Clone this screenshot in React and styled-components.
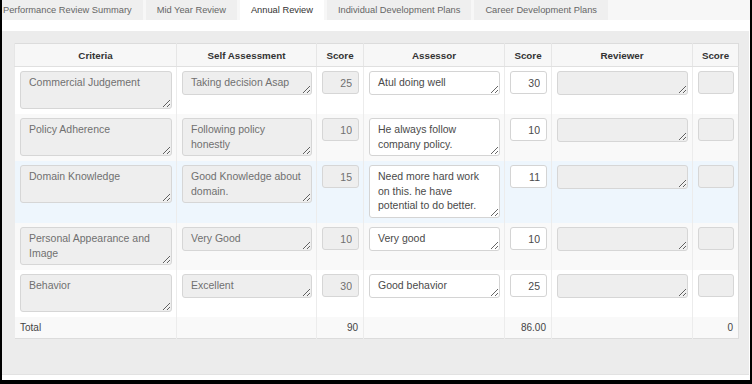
import React from 'react';
import styled, { createGlobalStyle } from 'styled-components';

const Global = createGlobalStyle`
  html, body { margin: 0; padding: 0; background: #fff; }
  body { font-family: "Liberation Sans", Arial, sans-serif; }
`;

const Frame = styled.div`
  width: 752px;
  height: 384px;
  box-sizing: border-box;
  border-left: 2px solid #000;
  border-right: 2px solid #000;
  border-bottom: 4px solid #000;
  background: #fff;
  display: flex;
  flex-direction: column;
  overflow: hidden;
`;

const TabBar = styled.div`
  display: flex;
  height: 20px;
  gap: 3px;
  background: #f7f7f7;
  margin-left: -10px;
`;

const Tab = styled.div`
  display: flex;
  align-items: center;
  padding: 0 11px;
  font-size: 9.3px;
  color: ${(p) => (p.$active ? '#333' : '#666')};
  background: ${(p) => (p.$active ? '#fff' : '#efefef')};
  white-space: nowrap;
`;

const Panel = styled.div`
  flex: 1;
  margin: 11px 1px 5px 0;
  padding: 12px 11px 12px 12px;
  background: #ececec;
  border-bottom: 1px solid #e2e2e2;
`;

const Table = styled.table`
  width: 724px;
  table-layout: fixed;
  border-collapse: collapse;
  background: #fff;
  border: 1px solid #dcdcdc;
  font-size: 10.5px;
`;

const Th = styled.th`
  height: 22px;
  padding: 0;
  background: #f7f7f7;
  border-bottom: 1px solid #e0e0e0;
  border-left: 1px solid #e6e6e6;
  font-weight: bold;
  font-size: 9.8px;
  color: #333;
  text-align: center;
`;

const Tr = styled.tr`
  background: ${(p) => (p.$hover ? '#eef6fd' : p.$striped ? '#f9f9f9' : '#fff')};
`;

const Td = styled.td`
  padding: 4px 4px 5px 5px;
  vertical-align: top;
  border-left: 1px solid #ececec;
`;

const TotalTd = styled.td`
  height: 21px;
  padding: 0 5px;
  vertical-align: middle;
  border-left: 1px solid #ececec;
  text-align: ${(p) => (p.$right ? 'right' : 'left')};
  color: #444;
  font-size: 10px;
`;

const Area = styled.textarea`
  display: block;
  width: 100%;
  box-sizing: border-box;
  height: ${(p) => p.$h}px;
  margin: 0;
  padding: 3px 8px;
  border: 1px solid ${(p) => (p.$editable ? '#d4d4d4' : '#d6d6d6')};
  border-radius: 3px;
  background: ${(p) => (p.$editable ? '#fff' : '#eeeeee')};
  color: ${(p) => (p.$editable ? '#4a4a4a' : '#707070')};
  font-family: "Liberation Sans", Arial, sans-serif;
  font-size: 10.5px;
  line-height: 14.5px;
  resize: vertical;
  overflow: hidden;
  outline: none;
`;

const ScoreBox = styled.input`
  display: block;
  width: 100%;
  box-sizing: border-box;
  height: 23px;
  margin: 0;
  padding: 0 6px;
  border: 1px solid ${(p) => (p.$editable ? '#d4d4d4' : '#d6d6d6')};
  border-radius: 3px;
  background: ${(p) => (p.$editable ? '#fff' : '#eeeeee')};
  color: ${(p) => (p.$editable ? '#4a4a4a' : '#707070')};
  font-family: "Liberation Sans", Arial, sans-serif;
  font-size: 10.5px;
  text-align: right;
  outline: none;
`;

const H = { 1: 24, 2: 38, 3: 53 };

const rows = [
  { c: 'Commercial Judgement', s: 'Taking decision Asap', sl: 1, sc: '25', a: 'Atul doing well', al: 1, as: '30' },
  { c: 'Policy Adherence', s: 'Following policy honestly', sl: 2, sc: '10', a: 'He always follow company policy.', al: 2, as: '10' },
  { c: 'Domain Knowledge', s: 'Good Knowledge about domain.', sl: 2, sc: '15', a: 'Need more hard work on this. he have potential to do better.', al: 3, as: '11', hover: true },
  { c: 'Personal Appearance and Image', s: 'Very Good', sl: 1, sc: '10', a: 'Very good', al: 1, as: '10' },
  { c: 'Behavior', s: 'Excellent', sl: 1, sc: '30', a: 'Good behavior', al: 1, as: '25' },
];

const tabs = ['Performance Review Summary', 'Mid Year Review', 'Annual Review', 'Individual Development Plans', 'Career Development Plans'];

export default function App() {
  return (
    <Frame>
      <Global />
      <TabBar>
        {tabs.map((t) => (
          <Tab key={t} $active={t === 'Annual Review'}>{t}</Tab>
        ))}
      </TabBar>
      <Panel>
        <Table>
          <colgroup>
            <col style={{ width: 162 }} />
            <col style={{ width: 140 }} />
            <col style={{ width: 47 }} />
            <col style={{ width: 141 }} />
            <col style={{ width: 47 }} />
            <col style={{ width: 141 }} />
            <col style={{ width: 46 }} />
          </colgroup>
          <thead>
            <tr>
              <Th>Criteria</Th>
              <Th>Self Assessment</Th>
              <Th>Score</Th>
              <Th>Assessor</Th>
              <Th>Score</Th>
              <Th>Reviewer</Th>
              <Th>Score</Th>
            </tr>
          </thead>
          <tbody>
            {rows.map((r, i) => (
              <Tr key={r.c} $striped={i % 2 === 1} $hover={r.hover}>
                <Td><Area readOnly $h={H[2]} value={r.c} /></Td>
                <Td><Area readOnly $h={H[r.sl]} value={r.s} /></Td>
                <Td><ScoreBox readOnly value={r.sc} /></Td>
                <Td><Area readOnly $editable $h={H[r.al]} value={r.a} spellCheck={false} /></Td>
                <Td><ScoreBox readOnly $editable value={r.as} /></Td>
                <Td><Area readOnly $h={H[1]} value="" /></Td>
                <Td><ScoreBox readOnly value="" /></Td>
              </Tr>
            ))}
            <Tr $striped>
              <TotalTd>Total</TotalTd>
              <TotalTd />
              <TotalTd $right>90</TotalTd>
              <TotalTd />
              <TotalTd $right>86.00</TotalTd>
              <TotalTd />
              <TotalTd $right>0</TotalTd>
            </Tr>
          </tbody>
        </Table>
      </Panel>
    </Frame>
  );
}
